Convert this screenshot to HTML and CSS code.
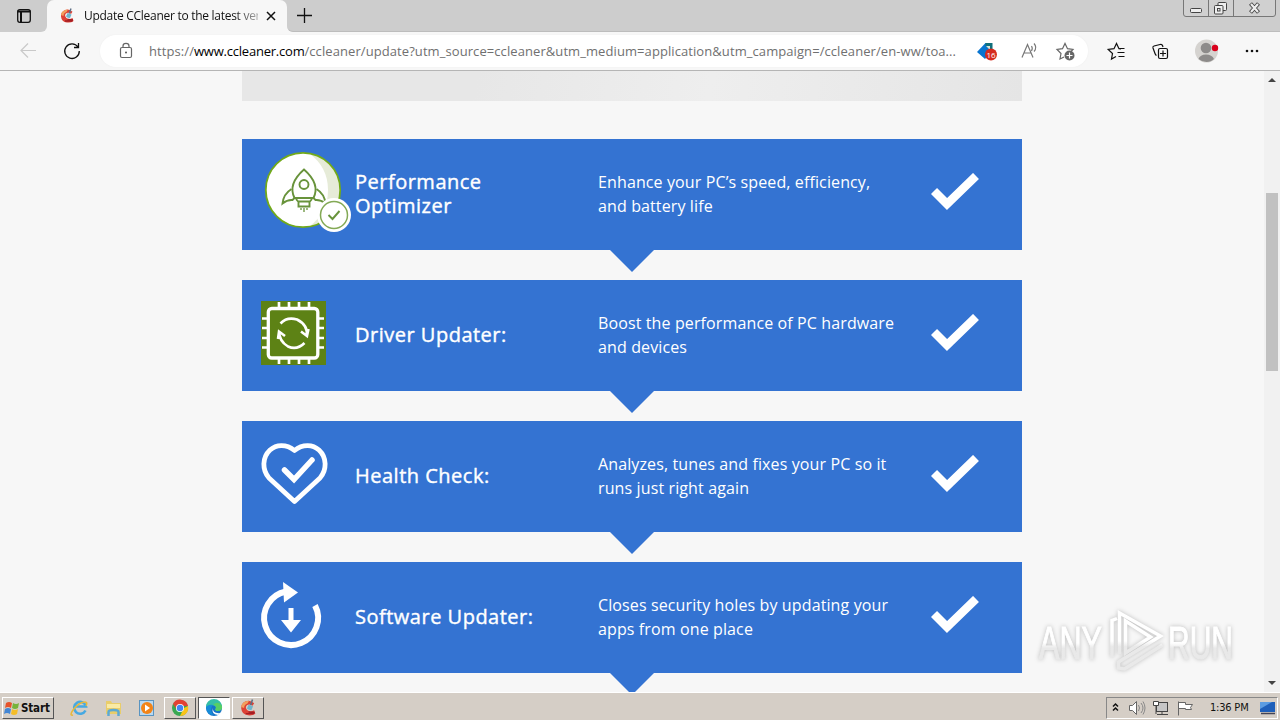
FILE: index.html
```html
<!DOCTYPE html>
<html lang="en">
<head>
<meta charset="utf-8">
<title>Update CCleaner to the latest version</title>
<link rel="stylesheet" href="styles.css">
</head>
<body>
<svg width="0" height="0" class="defs">
  <defs>
    <symbol id="cc" viewBox="0 0 16 16">
      <path d="M13.500 3.800Q10 .5 6 2Q1.500 4 2 8.500Q2.500 14 8 14.500Q12 15 14.500 13L13.500 10Q10 12 7.500 10Q5 7.500 7 5.500Q9.500 4 12 6z" fill="#dc4236"/>
      <path d="M2 7Q2.500 2 9 1.500L7.500 4Q4.500 5 4.500 8z" fill="#f2a05e"/>
      <path d="M12 .5L10.300 5.500" stroke="#5d6f86" stroke-width="1.400"/>
      <path d="M8.500 5l4 1.500-1.500 3.500q-2.500 0-4-1.500z" fill="#6fb4cc"/>
      <path d="M6 13l7.500 0M8.500 11.500l5.500 .5" stroke="#a51f24" stroke-width="1.300"/>
    </symbol>
    <symbol id="tick" viewBox="0 0 48 38"><path d="M3 18L16 31L45 3" fill="none" stroke="#fff" stroke-width="8.500"/></symbol>
  </defs>
</svg>

<header class="tabs">
  <div class="tab-menu">
    <svg width="47" height="32" viewBox="0 0 47 32"><rect x="17.700" y="9.700" width="12.600" height="12.600" rx="2.200" fill="none" stroke="#111" stroke-width="1.300"/><path d="M17.500 11.500h13M21 12v10" stroke="#111" stroke-width="2"/></svg>
  </div>
  <div class="tab">
    <svg class="favicon" width="16" height="16"><use href="#cc"/></svg>
    <span class="tab-title">Update CCleaner to the latest ver</span>
    <svg class="tab-close" width="10" height="10" viewBox="0 0 10 10"><path d="M1 1l8 8M9 1l-8 8" stroke="#111" stroke-width="1.500"/></svg>
  </div>
  <div class="tab-rest">
    <svg width="34" height="32" viewBox="287 0 34 32"><path d="M297 15.500h15M304.500 8v15" stroke="#111" stroke-width="1.300"/></svg>
    <svg class="winbtns" width="96" height="18" viewBox="1182 0 96 18">
      <path d="M1183.500 0V14q0 2.500 2.500 2.500H1273q2.500 0 2.500-2.500V0" fill="#d0d0d0" stroke="#777"/><path d="M1208.500 0V16M1233.500 0V16" stroke="#777"/>
      <g fill="#eee" stroke="#444"><rect x="1190.500" y="8.500" width="11" height="4" rx="1"/><rect x="1218" y="2.500" width="8.500" height="8" rx="1"/><rect x="1214.500" y="5.500" width="8.500" height="8.500" rx="1"/><rect x="1217.500" y="8.500" width="2.500" height="2.500"/></g>
      <path d="M1250.500 3.500l8 9M1258.500 3.500l-8 9" stroke="#444" stroke-width="4"/><path d="M1251 4l7 8M1258 4l-7 8" stroke="#eee" stroke-width="2.200"/>
    </svg>
  </div>
</header>

<nav class="toolbar">
  <svg width="100" height="38" viewBox="0 32 100 38" fill="none"><path d="M36 50.500H21M28 43.500l-7 7 7 7" stroke="#c9c9c9" stroke-width="1.200"/><path d="M78 47A7.300 7.300 0 1 0 79.300 51M78.500 43v4.500H74" stroke="#111" stroke-width="1.300"/></svg>
  <div class="address">
    <svg width="49" height="32" viewBox="100 35 49 32"><rect x="120.500" y="47.500" width="11" height="10" rx="1.500" fill="none" stroke="#666" stroke-width="1.200"/><path d="M123 47v-1q0-2.700 3-2.700t3 2.700v1" fill="none" stroke="#666" stroke-width="1.200"/><circle cx="126" cy="52.500" r="1" fill="#555"/></svg>
    <span class="url">https://<b>www.ccleaner.com</b>/ccleaner/update?utm_source=ccleaner&amp;utm_medium=application&amp;utm_campaign=/ccleaner/en-ww/toa...</span>
    <svg class="address-icons" width="128" height="32" viewBox="960 35 128 32" fill="none">
      <path d="M977 52l8.500-9H991v9l-6 7z" fill="#0875d1"/><path d="M985.500 43h7v8l-7-5z" fill="#10707c"/><path d="M986 46h4v4z" fill="#d5e5de"/>
      <circle cx="991" cy="54.500" r="6" fill="#d52b1e"/>
      <text x="986.500" y="58" class="badge">16</text>
      <path d="M1022 57.500l5.500-13 5.500 13M1024 53h7M1031.500 46q1.500 2 0 5M1034 43.500q3.500 4 0 8" stroke="#777" stroke-width="1.200"/>
      <path d="M1064 57l-4 2 1-5.500-4-4 5.500-.8 2.500-5.200 2.500 5.200 5.500.8-2 2" stroke="#666" stroke-width="1.200"/>
      <circle cx="1069.500" cy="55.500" r="5" fill="#666"/><path d="M1066.500 55.500h6M1069.500 52.500v6" stroke="#fff" stroke-width="1.200"/>
    </svg>
  </div>
  <svg width="192" height="38" viewBox="1088 32 192 38" fill="none">
    <path d="M1116 56.500l-4.500 2.500 1-5.500-4.300-4 5.800-.8 2.500-5.200 2.500 5.200 2 .3M1118.500 48.500h6M1117.500 52.500h7M1118.500 56.500h6" stroke="#111" stroke-width="1.200"/>
    <rect x="1158.500" y="48.500" width="9" height="10" rx="1.500" stroke="#111" stroke-width="1.200"/><path d="M1163 50.500v6M1160 53.500h6M1156.500 55.500q-1-.5-1.500-2l-2-5.500q-.5-1.500 1-2l6-1.500q2-.5 2.500 1l.5 1.500" stroke="#111" stroke-width="1.200"/>
    <circle cx="1206.500" cy="51" r="11.500" fill="#d5d3d0"/><circle cx="1206" cy="48" r="5.300" fill="#8d8b8a"/><path d="M1198.500 59q1.500-4.500 7.500-4.500t8 4.500q-3 3-7.500 3t-8-3z" fill="#8d8b8a"/><circle cx="1215" cy="48" r="3.200" fill="#d9001b"/>
    <g fill="#111"><circle cx="1247" cy="51" r="1.300"/><circle cx="1252" cy="51" r="1.300"/><circle cx="1257" cy="51" r="1.300"/></g>
  </svg>
</nav>

<main class="viewport">
  <div class="page">
    <div class="banner"></div>
    <section class="feature">
      <svg width="113" height="111" viewBox="242 139 113 111" fill="none">
        <circle cx="303" cy="190" r="37.200" fill="#fff"/><path d="M309 153.300A37.200 37.200 0 0 1 309 226.700Q328 213 328 190T309 153.300z" fill="#e6ebd8"/><circle cx="303" cy="190" r="37.200" stroke="#72aa19" stroke-width="1.800"/>
        <g stroke="#68933b" stroke-width="1.900"><path d="M294.500 198q-7-14 9.500-28.500q16.500 14.500 9.500 28.500z"/><circle cx="304" cy="184.500" r="4.500"/><path d="M291.500 189q-8 5-9 14.500 5-4 10-3.500l2-2M316.500 189q8 5 9 14.500-5-4-10-3.500l-2-2M298.500 201.500h11v5h-11zM296 199l2.500 3M312 199l-2.500 3"/><path d="M301 208v2M304 208v4M307 208v2" stroke-width="1.300"/></g>
        <circle cx="334" cy="215" r="17" fill="#fff"/><circle cx="334" cy="215" r="13.500" stroke="#83a955" stroke-width="1.500"/><path d="M328.500 215l4 4 7-8" stroke="#68933b" stroke-width="1.900"/>
      </svg>
      <h2>Performance<br>Optimizer</h2>
      <p>Enhance your PC’s speed, efficiency,<br>and battery life</p>
      <svg class="tick" width="48" height="38"><use href="#tick"/></svg>
    </section>
    <section class="feature">
      <svg width="113" height="111" viewBox="242 280 113 111" fill="none">
        <rect x="261" y="301" width="65" height="64" fill="#5d8215"/>
        <g stroke="#fff"><rect x="268.300" y="308.500" width="49.500" height="49.500" rx="3.500" stroke-width="3.300"/><path d="M279 302v6M289 302v6M299 302v6M309 302v6M279 358v6M289 358v6M299 358v6M309 358v6M262 318.500h6M262 328h6M262 338h6M262 347.500h6M318 318.500h6M318 328h6M318 338h6M318 347.500h6" stroke-width="2.700"/><path d="M280.500 323.500Q287 316.500 297 319.500Q308 325 307 336M301 331.500l6 4.500 1.500-7M304.500 343Q297 350.500 288 346.500Q279 341 279 331M285 336l-6-4.500-1 7.500" stroke-width="2.600"/></g>
      </svg>
      <h2>Driver Updater:</h2>
      <p>Boost the performance of PC hardware<br>and devices</p>
      <svg class="tick" width="48" height="38"><use href="#tick"/></svg>
    </section>
    <section class="feature">
      <svg width="113" height="111" viewBox="242 421 113 111" fill="none" stroke="#fff">
        <path d="M294.500 450.500C286 443.500 276 444.500 270 450C262 457.500 262 470 269 478L294.500 501.500L320 478C327 470 327 457.500 319 450C313 444.500 303 443.500 294.500 450.500z" stroke-width="4.800" stroke-linejoin="round"/><path d="M284.500 470l9.500 9.500 18-19.500" stroke-width="5.500" stroke-linecap="round"/>
      </svg>
      <h2>Health Check:</h2>
      <p>Analyzes, tunes and fixes your PC so it<br>runs just right again</p>
      <svg class="tick" width="48" height="38"><use href="#tick"/></svg>
    </section>
    <section class="feature">
      <svg width="113" height="111" viewBox="242 562 113 111" fill="none">
        <path d="M286 591.500A27 27 0 1 0 315 605.500" stroke="#fff" stroke-width="6"/><path d="M283 582l15 10.500-14 10z" fill="#fff"/><path d="M288.500 608h5v12h7.500L291 632.500 281 620h7.500z" fill="#fff"/>
      </svg>
      <h2>Software Updater:</h2>
      <p>Closes security holes by updating your<br>apps from one place</p>
      <svg class="tick" width="48" height="38"><use href="#tick"/></svg>
    </section>
  </div>
  <div class="scrollbar">
    <svg width="16" height="18" viewBox="0 0 16 18"><path d="M4 11l4-4 4 4z" fill="#444"/></svg>
    <div class="thumb"></div>
    <svg class="down" width="16" height="18" viewBox="0 0 16 18"><path d="M4 7l4 4 4-4z" fill="#444"/></svg>
  </div>
  <svg class="watermark" width="230" height="76" viewBox="1030 602 230 76" fill="none">
    <defs><linearGradient id="fade" x1="0" y1="0" x2="0" y2="1"><stop offset=".5" stop-color="#fff"/><stop offset=".6" stop-color="#e9e9e9"/></linearGradient></defs>
    <text x="1039" y="659" textLength="63" lengthAdjust="spacingAndGlyphs">ANY</text>
    <text x="1168" y="659" textLength="65" lengthAdjust="spacingAndGlyphs">RUN</text>
    <path d="M1112 657V620.500l5-2M1119.500 654V613l41 23-42 26v6l6 1 38-24M1125.500 621v32l25-16z" stroke="url(#fade)" stroke-width="3.500"/>
  </svg>
</main>

<footer class="taskbar">
  <div class="start">
    <svg width="16" height="16" viewBox="0 0 16 16"><path d="M2 3q3-2 6 0L7 8Q4 6 1 8z" fill="#e6532b"/><path d="M9 3q3 2 6 0l-1 5q-3 2-6 0z" fill="#77b33b"/><path d="M1 9q3-2 6 0l-1 5Q3 12 0 14z" fill="#4386d4"/><path d="M8 9q3 2 6 0l-1 5q-3 2-6 0z" fill="#f5bd27"/></svg>
    <span>Start</span>
  </div>
  <svg class="quick" width="110" height="28" viewBox="54 692 110 28" fill="none">
    <path d="M85.500 709.500a6 6 0 1 1 .5-4H75" stroke="#46a9e2" stroke-width="2.600"/><path d="M73 714q-4 1 0-5 6-8 12-8 3 0 1 4" stroke="#e7b83b" stroke-width="1.500"/>
    <path d="M106 700h5l1 2h9v11h-15z" fill="#e9cd6a"/><path d="M107 703h13v4h-13z" fill="#f9eaa4"/><path d="M108.500 715v-4q0-2 5-2t5 2v4" stroke="#5ca9d3" stroke-width="2.500"/>
    <rect x="139.500" y="699.500" width="14" height="15" fill="#b9d9f1" stroke="#5994c1"/><circle cx="147" cy="707" r="6" fill="#f28418"/><path d="M145 703.500l5 3.500-5 3.500z" fill="#fff"/>
  </svg>
  <div class="task"><svg width="18" height="18" viewBox="0 0 18 18"><circle cx="9" cy="9" r="8" fill="#39a852"/><path d="M2 5a8 8 0 0 1 15 2H9z" fill="#e34133"/><path d="M17 7a8 8 0 0 1-8 10l4-8z" fill="#fbc316"/><path d="M2 5l5 7 2-6z" fill="#e34133"/><circle cx="9" cy="9" r="4" fill="#fff"/><circle cx="9" cy="9" r="3.200" fill="#4285f4"/></svg></div>
  <div class="task active"><svg width="18" height="18" viewBox="0 0 18 18"><circle cx="9" cy="9" r="8" fill="#1774c7"/><path d="M1 8a8 8 0 0 1 16 0q0 4-5 4-3-1-1-3-1-5-10-1z" fill="#36bfa7"/><path d="M17 7q1 5-5 5-3-1-1-3 0-3-3-3 5-5 9 1z" fill="#57cf65"/><path d="M8 9q-1 6 8 5-1 1-3 2-7-1-5-7z" fill="#fff"/><path d="M1 8q3-3 7-2-4 4 0 10-6 0-7-8z" fill="#168cd8"/></svg></div>
  <div class="task"><svg width="18" height="18"><use href="#cc"/></svg></div>
  <div class="tray">
    <svg width="96" height="20" viewBox="1107 697 96 20" fill="none">
      <path d="M1113 705.500l2.500-2.500 2.500 2.500M1113 709.500l2.500-2.500 2.500 2.500" stroke="#111" stroke-width="1.500"/>
      <g stroke="#666"><path d="M1129.500 704.500h3l4-4v13l-4-4h-3z" fill="#fff"/><path d="M1138.500 704q2 3 0 6M1141 702q4 5 0 10M1143 700.500q4 6.500 0 13" stroke="#888"/><rect x="1156.500" y="701.500" width="11" height="9" fill="#c6c6c6" stroke="#444"/><path d="M1162 711v2.500M1157 713.500h11" stroke="#444"/><path d="M1153.500 700.500h5v4h-5zM1156 705v8" fill="#fff" stroke="#444"/><path d="M1178.500 700.500v14M1178.500 701.500h7v2h7l-2 3 1 2h-6v-1h-7" fill="#fff"/></g>
    </svg>
    <span class="clock">1:36 PM</span>
    <svg class="desk" width="17" height="16" viewBox="0 0 17 16"><path d="M1 2h15v10H1z" fill="#1e5fba"/><path d="M1 2h12L1 9z" fill="#5b9ce2"/><path d="M2 13.500h14" stroke="#445" stroke-width="1.500"/></svg>
  </div>
</footer>
</body>
</html>
```
FILE: styles.css
```css
* { box-sizing: border-box; }
body { margin: 0; width: 1280px; height: 720px; overflow: hidden; display: flex; flex-direction: column; background: #f7f7f7; font-family: "Open Sans", "Noto Sans", sans-serif; color: #111; }
svg { display: block; flex: none; }
.defs { position: absolute; }

.tabs { height: 32px; flex: none; display: flex; background: #f7f7f7; }
.tab-menu { width: 47px; background: #cdcdcd; border-radius: 0 0 6px 0; }
.tab { width: 240px; display: flex; align-items: center; padding-left: 12px; background: #f7f7f7; border-radius: 7px 7px 0 0; box-shadow: 0 -8px 0 #cdcdcd; }
.tab-title { width: 174px; margin: 0 8px 0 9px; white-space: nowrap; font-size: 12px; letter-spacing: -.28px; line-height: 20px; mask-image: linear-gradient(90deg, #000 86%, rgba(0, 0, 0, .3) 100%); }
.tab-rest { flex: 1; display: flex; justify-content: space-between; background: #cdcdcd; border-radius: 0 0 0 6px; border-bottom: 1px solid #bdbdbd; }
.winbtns { margin-right: 2px; }

.toolbar { height: 39px; flex: none; display: flex; border-bottom: 1px solid #b5b5b5; background: #f7f7f7; }
.address { width: 988px; height: 32px; margin-top: 3px; border-radius: 16px; background: #fff; box-shadow: 0 0 2px #eee; display: flex; align-items: center; }
.url { width: 811px; white-space: nowrap; font-size: 13px; color: #707070; letter-spacing: .08px; }
.url b { font-weight: 400; color: #000; letter-spacing: -.22px; }
.badge { font: 8px "Open Sans", sans-serif; fill: #fff; }

.viewport { position: relative; height: 621px; flex: none; display: flex; justify-content: space-between; overflow: hidden; background: #f7f7f7; }
.page { width: 780px; margin-left: 242px; display: flex; flex-direction: column; gap: 30px; }
.banner { height: 30px; margin-bottom: 8px; flex: none; background: linear-gradient(100deg, #e7e7e7 30%, #eee 60%, #e5e5e5); }
.feature { position: relative; height: 111px; flex: none; display: grid; grid-template-columns: 113px 243px 333px 1fr; align-items: center; background: #3473d2; color: #fff; }
.feature::after { content: ""; position: absolute; left: 368px; top: 100%; border: 22px solid transparent; border-top-color: #3473d2; border-bottom: 0; }
.feature h2 { margin: 0 0 2px; font-size: 20px; font-weight: 400; -webkit-text-stroke: .4px #fff; line-height: 24px; letter-spacing: .5px; white-space: nowrap; }
.feature p { margin: 0 0 2px; font-size: 16px; line-height: 24px; letter-spacing: .12px; white-space: nowrap; }
.tick { margin-bottom: 6px; }
.scrollbar { width: 16px; display: flex; flex-direction: column; align-items: center; background: #f1f1f1; }
.thumb { width: 12px; height: 178px; margin-top: 104px; background: #c1c1c1; }
.down { margin-top: auto; }
.watermark { position: absolute; left: 1030px; top: 531px; overflow: visible; filter: drop-shadow(0 0 2px #bbb); }
.watermark text { font: 46px "Liberation Sans", sans-serif; fill: url(#fade); stroke: url(#fade); stroke-width: 1px; }

.taskbar { height: 28px; flex: none; display: flex; align-items: center; padding: 2px 2px 0; background: #d5cec6; border-top: 1px solid #fff; font-family: "DejaVu Sans", sans-serif; }
.start { width: 52px; height: 22px; display: flex; align-items: center; gap: 1px; padding-left: 1px; font: bold 11.500px "DejaVu Sans Condensed", sans-serif; letter-spacing: -.15px; border: 1px solid; border-color: #fff #555 #555 #fff; }
.quick { margin-bottom: 2px; }
.task { width: 32px; height: 22px; margin-right: 2px; display: flex; align-items: center; justify-content: center; border: 1px solid; border-color: #fff #555 #555 #fff; }
.task.active { background: #fff; border-color: #555 #fff #fff #555; }
.tray { width: 172px; height: 22px; margin-left: auto; display: flex; align-items: center; border: 1px solid; border-color: #888 #fff #fff #888; }
.clock { width: 50px; padding-left: 7px; font: 11px "DejaVu Sans Condensed", sans-serif; white-space: nowrap; letter-spacing: -.2px; }
.desk { margin-left: 6px; }
```
